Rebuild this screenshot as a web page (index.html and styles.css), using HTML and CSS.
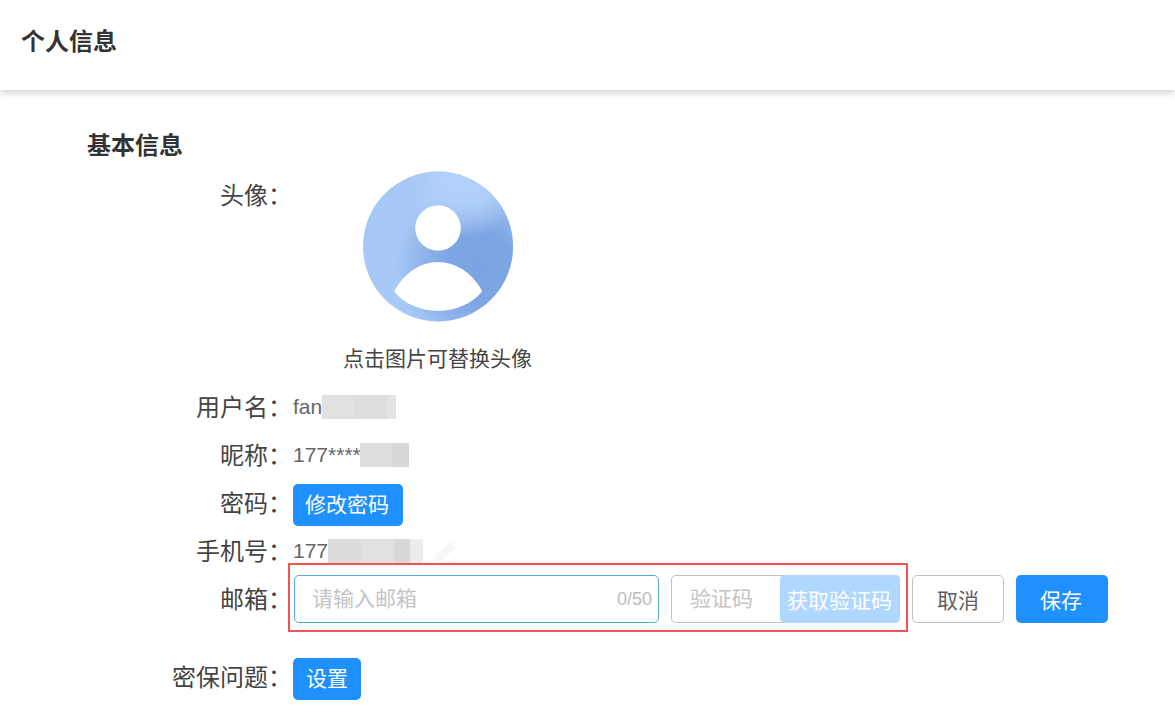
FILE: index.html
```html
<!DOCTYPE html>
<html lang="zh-CN">
<head>
<meta charset="utf-8">
<title>个人信息</title>
<link rel="stylesheet" href="styles.css">
</head>
<body>
<header class="topbar"><h1 class="topbar-title">个人信息</h1></header>
<main class="content">
  <h2 class="section-title">基本信息</h2>
  <div class="row row-avatar">
    <span class="label label-top">头像：</span>
    <div class="avatar-col">
      <svg class="avatar" width="151" height="151" viewBox="0 0 151 151" aria-hidden="true">
        <defs>
          <linearGradient id="base" x1="0.1" y1="0.2" x2="0.9" y2="0.9">
            <stop offset="0" stop-color="#a6c8f6"/>
            <stop offset="1" stop-color="#a9caf7"/>
          </linearGradient>
          <radialGradient id="shade" cx="0.78" cy="0.64" r="0.56">
            <stop offset="0" stop-color="#7ba2e2"/>
            <stop offset="0.4" stop-color="#7ea5e3"/>
            <stop offset="0.7" stop-color="#7ea5e3" stop-opacity="0.6"/>
            <stop offset="1" stop-color="#7ea5e3" stop-opacity="0"/>
          </radialGradient>
          <radialGradient id="hi" cx="0.68" cy="0.04" r="0.4">
            <stop offset="0" stop-color="#b3d1fa"/>
            <stop offset="0.5" stop-color="#b3d1fa" stop-opacity="0.8"/>
            <stop offset="1" stop-color="#b3d1fa" stop-opacity="0"/>
          </radialGradient>
        </defs>
        <circle cx="75" cy="75.5" r="75" fill="url(#base)"/>
        <circle cx="75" cy="75.5" r="75" fill="url(#shade)"/>
        <circle cx="75" cy="75.5" r="75" fill="url(#hi)"/>
        <circle cx="75" cy="57" r="22.8" fill="#fff"/>
        <path d="M33 120C42.500 103 57.500 92.500 75 92.500S107.500 103 117.500 120C109.500 130 93.500 138.500 75 138.500S40.500 130 33 120Z" fill="#fff" stroke="#fff" stroke-width="3" stroke-linejoin="round"/>
      </svg>
      <p class="avatar-hint">点击图片可替换头像</p>
    </div>
  </div>
  <div class="row row-text">
    <span class="label label-low">用户名：</span>
    <span class="value">fan</span>
    <span class="redact redact-name"><i class="seg s1"></i><i class="seg s2"></i><i class="seg s3"></i></span>
  </div>
  <div class="row row-text">
    <span class="label label-low">昵称：</span>
    <span class="value">177****</span>
    <span class="redact redact-nick"><i class="seg s4"></i><i class="seg s5"></i></span>
  </div>
  <div class="row row-pwd">
    <span class="label label-high">密码：</span>
    <button class="btn btn-primary btn-small btn-pwd" type="button">修改密码</button>
  </div>
  <div class="row row-phone">
    <span class="label label-low">手机号：</span>
    <span class="value">177</span>
    <span class="redact redact-phone"><i class="seg s6"></i><i class="seg s7"></i><i class="seg s8"></i><i class="seg s9"></i></span>
    <svg class="pencil" width="26" height="26" viewBox="0 0 26 26" aria-hidden="true">
      <path d="M2 23l1.500-6L17 4l6 5.500L9 22z" fill="#f6f6f6"/>
      <path d="M11 24h12" stroke="#f7f7f7" stroke-width="1.500"/>
    </svg>
  </div>
  <div class="row row-email">
    <span class="label label-low">邮箱：</span>
    <div class="field field-email">
      <span class="placeholder">请输入邮箱</span>
      <span class="counter">0/50</span>
    </div>
    <div class="field field-code">
      <span class="placeholder">验证码</span>
      <button class="btn btn-code" type="button">获取验证码</button>
    </div>
    <button class="btn btn-cancel" type="button">取消</button>
    <button class="btn btn-primary btn-save" type="button">保存</button>
    <span class="highlight-box"></span>
  </div>
  <div class="row row-security">
    <span class="label label-high">密保问题：</span>
    <button class="btn btn-primary btn-small btn-set" type="button">设置</button>
  </div>
</main>
</body>
</html>
```
FILE: styles.css
```css
* { box-sizing: border-box; }
html, body { margin: 0; padding: 0; }
body {
  width: 1175px;
  height: 714px;
  overflow: hidden;
  background: #fff;
  color: #333;
  font-family: "Liberation Sans", "Noto Sans CJK SC", sans-serif;
}
.topbar {
  height: 90px;
  display: flex;
  align-items: center;
  padding: 0 0 6px 21px;
  background: #fff;
  box-shadow: 0 2px 8px rgba(0, 0, 0, .22);
}
.topbar-title {
  margin: 0;
  font-size: 24px;
  line-height: 32px;
  font-weight: 700;
  color: #333;
}
.content { padding-top: 40px; }
.section-title {
  margin: 0 0 9px 87px;
  font-size: 24px;
  line-height: 32px;
  font-weight: 700;
  color: #333;
}
.row { display: flex; align-items: center; }
.label {
  flex: none;
  width: 292px;
  text-align: right;
  font-size: 24px;
  line-height: 32px;
  color: #444;
}
.label-low { padding-top: 2px; }
.label-high { padding-bottom: 2px; }
.label-top { align-self: flex-start; padding-top: 9px; height: 41px; }
.row-avatar { align-items: flex-start; }
.avatar-col {
  display: flex;
  flex-direction: column;
  align-items: center;
  width: 291px;
}
.avatar { display: block; margin-left: 1px; }
.avatar-hint {
  margin: 23px 0 0;
  font-size: 21px;
  line-height: 28px;
  color: #444;
}
.row-text { height: 48px; }
.row-avatar + .row-text { margin-top: 10px; }
.value {
  margin-left: 1px;
  font-size: 21px;
  line-height: 24px;
  color: #666;
}
.redact { display: flex; height: 24px; }
.redact-nick { margin-left: -1px; }
.seg { display: block; height: 100%; }
.s1 { width: 32px; background: #e1e1e1; }
.s2 { width: 33px; background: #dedede; }
.s3 { width: 9px; background: #e3e3e3; }
.s4 { width: 32px; background: #dedede; }
.s5 { width: 17px; background: #d8d8d8; }
.s6 { width: 33px; background: #dcdcdc; }
.s7 { width: 33px; background: #e1e1e1; }
.s8 { width: 16px; background: #d8d8d8; }
.s9 { width: 13px; background: #ececec; }
.row-pwd { margin-top: 5px; height: 42px; }
.row-phone { margin-top: 5px; height: 40px; }
.pencil { margin-left: 10px; }
.row-email { position: relative; margin-top: 4px; height: 48px; }
.btn {
  border: 0;
  padding: 0;
  border-radius: 5px;
  font-family: inherit;
  font-size: 21px;
  cursor: pointer;
}
.btn-primary { background: #1e90ff; color: #fff; }
.btn-small { height: 42px; line-height: 42px; margin-left: 1px; }
.btn-pwd { width: 110px; padding-right: 2px; }
.btn-set { width: 68px; }
.field {
  height: 48px;
  display: flex;
  align-items: center;
  border: 1px solid #c0c0c0;
  border-radius: 5px;
  background: #fff;
}
.field-email {
  width: 365px;
  margin-left: 2px;
  padding: 0 6px 0 17px;
  justify-content: space-between;
  border-color: #55abd3;
}
.placeholder { font-size: 21px; line-height: 28px; color: #c4c4c4; }
.counter { font-size: 18px; color: #bbb; }
.field-code {
  width: 229px;
  margin-left: 12px;
  padding-left: 19px;
  justify-content: space-between;
  border: 0;
  box-shadow: inset 0 0 0 1px #c0c0c0;
}
.btn-code {
  width: 120px;
  height: 48px;
  padding-right: 1px;
  background: #b0d7ff;
  color: #fff;
  font-size: 21px;
}
.btn-cancel {
  width: 92px;
  height: 48px;
  margin-left: 12px;
  background: #fff;
  border: 1px solid #c0c0c0;
  color: #606060;
}
.btn-save { width: 92px; height: 48px; margin-left: 12px; padding-right: 2px; }
.highlight-box {
  position: absolute;
  left: 288px;
  top: -12px;
  width: 620px;
  height: 69px;
  border: 2px solid #f55353;
  pointer-events: none;
}
.row-security { margin-top: 35px; height: 42px; }
```
